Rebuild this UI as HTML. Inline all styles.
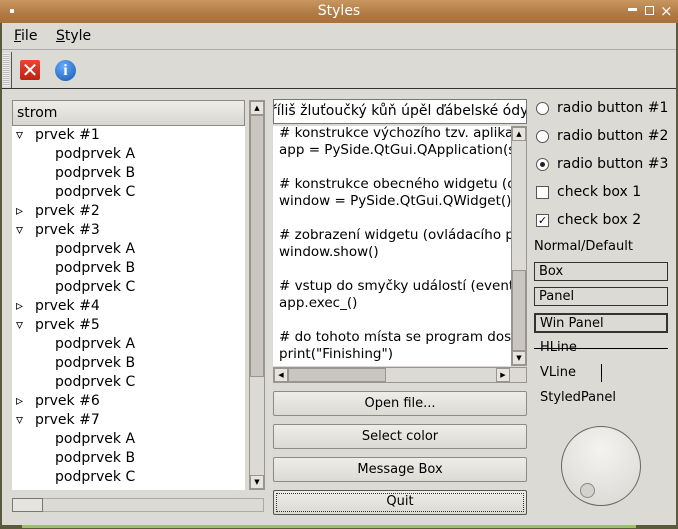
<!DOCTYPE html>
<html><head><meta charset="utf-8"><style>
*{box-sizing:border-box;margin:0;padding:0}
body{width:678px;height:529px;background:#5a5a3c;font-family:"DejaVu Sans","Liberation Sans",sans-serif;font-size:13px;color:#000;position:relative;overflow:hidden}
.a{position:absolute}
#win{left:2px;top:0;width:674px;height:525px;background:#dcdad5}
#title{left:0;top:0;width:678px;height:23px;background:linear-gradient(#c8965e,#b07a45 60%,#a8703c);color:#fff;text-align:center;line-height:23px;font-size:14px}
.t{white-space:nowrap}
.btn{background:linear-gradient(#eeede9,#dcdad5);border:1px solid #8e8b85;border-radius:2px;text-align:center;line-height:23px}
.sb{background:#c9c6c0;border:1px solid #9a968f}
.arr{background:#e6e4df;border:1px solid #9a968f;width:14px;height:14px;font-size:7px;text-align:center;line-height:12px}
.fr{border:1px solid #333;padding-left:4px;line-height:17px}
.tr div{position:relative}
.p{padding-left:39px}
.i{padding-left:19px}
.i span{position:absolute;left:0;font-size:14px}
</style></head><body>
<div class="a" id="win"></div>
<div class="a" id="title">Styles</div>
<div class="a" style="left:10px;top:9px;width:4px;height:4px;background:#fff"></div>
<div class="a" style="left:628px;top:8px;width:9px;height:3px;background:#fff"></div>
<div class="a" style="left:645px;top:6px;width:9px;height:9px;border:1px solid #fff"></div>
<div class="a t" style="left:660px;top:2px;color:#fff;font-size:15px">×</div>
<div class="a t" style="left:14px;top:28px;font-size:14px"><u>F</u>ile</div>
<div class="a t" style="left:56px;top:28px;font-size:14px"><u>S</u>tyle</div>
<div class="a" style="left:2px;top:49px;width:674px;height:1px;background:#aaa"></div>
<div class="a" style="left:3px;top:53px;width:6px;height:33px;background:repeating-linear-gradient(#eee 0 1px,#bbb 1px 2px)"></div>
<div class="a" style="left:11px;top:52px;width:1px;height:36px;background:#555"></div>
<div class="a" style="left:2px;top:88px;width:674px;height:1px;background:#333"></div>
<div class="a" style="left:20px;top:60px;width:20px;height:20px;background:linear-gradient(#e43,#b21);border-radius:2px;color:#fff;font-size:20px;line-height:20px;text-align:center;font-weight:bold">✕</div>
<div class="a" style="left:55px;top:60px;width:21px;height:21px;background:radial-gradient(circle at 40% 30%,#6af,#1557b0);border-radius:50%;color:#fff;font-weight:bold;text-align:center;line-height:21px;font-family:'Liberation Serif',serif;font-size:16px">i</div>
<!-- tree -->
<div class="a" style="left:12px;top:100px;width:233px;height:26px;background:linear-gradient(#eeede9,#d8d6d0);border:1px solid #8e8b85;padding-left:4px;line-height:24px;font-size:14px">strom</div>
<div class="a" style="left:12px;top:126px;width:233px;height:364px;background:#fff"></div>
<div class="a" style="left:249px;top:100px;width:16px;height:390px;background:#dcdad5;border:1px solid #9a968f"></div>
<div class="a arr" style="left:250px;top:101px">▲</div>
<div class="a sb" style="left:250px;top:115px;width:14px;height:262px"></div>
<div class="a arr" style="left:250px;top:475px">▼</div>
<div class="a" style="left:12px;top:498px;width:252px;height:14px;border:1px solid #aaa;background:#dcdad5"></div>
<div class="a" style="left:12px;top:498px;width:31px;height:14px;border:1px solid #777;background:#e6e4df"></div>
<div class="a tr" style="left:16px;top:126px;width:230px;font-size:14px;line-height:19px">
<div class="i"><span>▿</span>prvek #1</div><div class="p">podprvek A</div><div class="p">podprvek B</div><div class="p">podprvek C</div>
<div class="i"><span>▹</span>prvek #2</div>
<div class="i"><span>▿</span>prvek #3</div><div class="p">podprvek A</div><div class="p">podprvek B</div><div class="p">podprvek C</div>
<div class="i"><span>▹</span>prvek #4</div>
<div class="i"><span>▿</span>prvek #5</div><div class="p">podprvek A</div><div class="p">podprvek B</div><div class="p">podprvek C</div>
<div class="i"><span>▹</span>prvek #6</div>
<div class="i"><span>▿</span>prvek #7</div><div class="p">podprvek A</div><div class="p">podprvek B</div><div class="p">podprvek C</div>
</div>
<!-- line edit -->
<div class="a t" style="left:273px;top:99px;width:254px;height:25px;background:#fff;border:1px solid #777;overflow:hidden;line-height:22px;font-size:14px;text-indent:-3px">říliš žluťoučký kůň úpěl ďábelské ódy</div>
<!-- text edit -->
<div class="a" style="left:273px;top:126px;width:238px;height:240px;background:#fff;overflow:hidden">
<div class="t" style="margin-top:-1px;padding-left:6px;font-size:13.5px;line-height:17px"># konstrukce výchozího tzv. aplikace<br>app = PySide.QtGui.QApplication(sys<br><br># konstrukce obecného widgetu (o<br>window = PySide.QtGui.QWidget()<br><br># zobrazení widgetu (ovládacího p<br>window.show()<br><br># vstup do smyčky událostí (event<br>app.exec_()<br><br># do tohoto místa se program dos<br>print("Finishing")</div></div>
<div class="a" style="left:511px;top:126px;width:16px;height:240px;background:#dcdad5;border:1px solid #9a968f"></div>
<div class="a arr" style="left:512px;top:127px">▲</div>
<div class="a sb" style="left:512px;top:270px;width:14px;height:81px"></div>
<div class="a arr" style="left:512px;top:351px">▼</div>
<div class="a" style="left:273px;top:367px;width:254px;height:16px;background:#dcdad5;border:1px solid #9a968f"></div>
<div class="a arr" style="left:274px;top:368px">◀</div>
<div class="a sb" style="left:288px;top:368px;width:98px;height:14px"></div>
<div class="a arr" style="left:496px;top:368px">▶</div>
<!-- buttons -->
<div class="a btn" style="left:273px;top:391px;width:254px;height:25px">Open file...</div>
<div class="a btn" style="left:273px;top:424px;width:254px;height:25px">Select color</div>
<div class="a btn" style="left:273px;top:457px;width:254px;height:25px">Message Box</div>
<div class="a btn" style="left:273px;top:490px;width:254px;height:25px;border-color:#555"><div style="position:absolute;left:2px;top:2px;right:2px;bottom:2px;border:1px dotted #333"></div><span style="position:relative;top:-1px">Quit</span></div>
<!-- right -->
<div class="a" style="left:536px;top:102px;width:13px;height:13px;border:1px solid #555;border-radius:50%;background:#fff"></div>
<div class="a t" style="left:557px;top:100px;font-size:14px">radio button #1</div>
<div class="a" style="left:536px;top:130px;width:13px;height:13px;border:1px solid #555;border-radius:50%;background:#fff"></div>
<div class="a t" style="left:557px;top:128px;font-size:14px">radio button #2</div>
<div class="a" style="left:536px;top:158px;width:13px;height:13px;border:1px solid #555;border-radius:50%;background:#fff"></div>
<div class="a" style="left:540px;top:162px;width:5px;height:5px;border-radius:50%;background:#222"></div>
<div class="a t" style="left:557px;top:156px;font-size:14px">radio button #3</div>
<div class="a" style="left:536px;top:186px;width:13px;height:13px;border:1px solid #555;background:#fff"></div>
<div class="a t" style="left:557px;top:184px;font-size:14px">check box 1</div>
<div class="a" style="left:536px;top:214px;width:13px;height:13px;border:1px solid #555;background:#fff;font-size:11px;line-height:11px;text-align:center">✓</div>
<div class="a t" style="left:557px;top:212px;font-size:14px">check box 2</div>
<div class="a t" style="left:534px;top:239px">Normal/Default</div>
<div class="a fr" style="left:534px;top:262px;width:134px;height:19px">Box</div>
<div class="a fr" style="left:534px;top:287px;width:134px;height:19px">Panel</div>
<div class="a fr" style="left:534px;top:313px;width:134px;height:20px;border-width:2px">Win Panel</div>
<div class="a t" style="left:540px;top:340px">HLine</div>
<div class="a" style="left:534px;top:348px;width:134px;height:1px;background:#000"></div>
<div class="a t" style="left:540px;top:365px">VLine</div>
<div class="a" style="left:601px;top:364px;width:1px;height:18px;background:#000"></div>
<div class="a t" style="left:540px;top:390px">StyledPanel</div>
<div class="a" style="left:561px;top:426px;width:80px;height:80px;border-radius:50%;border:1px solid #666;background:radial-gradient(circle at 50% 30%,#f4f3f1,#d8d6d1)"></div>
<div class="a" style="left:580px;top:483px;width:15px;height:15px;border-radius:50%;border:1px solid #888;background:#d4d2cd"></div>
<div class="a" style="left:0;top:525px;width:678px;height:4px;background:#5a5a3c"></div>
<div class="a" style="left:22px;top:525px;width:614px;height:3px;background:#9bc06a"></div>
</body></html>
